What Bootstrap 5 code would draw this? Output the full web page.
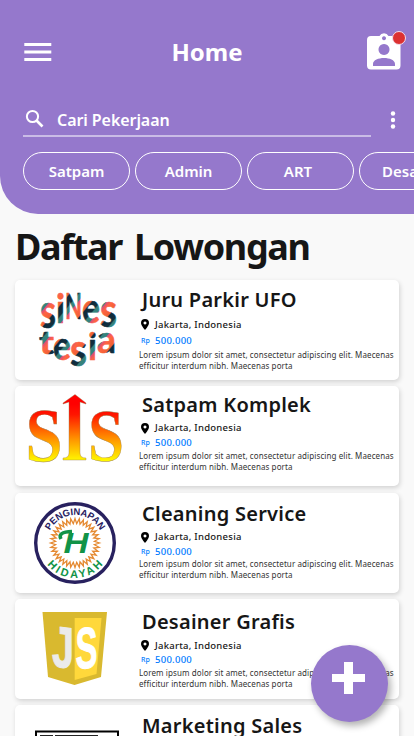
<!DOCTYPE html>
<html lang="id">
<head>
<meta charset="utf-8">
<meta name="viewport" content="width=device-width, initial-scale=1">
<title>Home</title>
<link href="https://cdn.jsdelivr.net/npm/bootstrap@5.3.0/dist/css/bootstrap.min.css" rel="stylesheet">
<style>
body{font-family:"Noto Sans","Open Sans",sans-serif;background:#f9f9f9;color:#161616;height:736px;overflow:hidden}
.hero{background:#9578cc;height:214px;border-bottom-left-radius:38px;color:#fff;padding:31px 0 0 23px}
.topbar{height:42px;padding-right:12px}
.topbar h1{font-size:24px;font-weight:700;line-height:42px;padding-right:6px}
.dot{position:absolute;width:14px;height:14px;right:-4px;top:0;background:#dc3130;border:1px solid #f3dcea;border-radius:50%}
.search-row{margin-top:31px;height:33px}
.search-line{width:348px;height:33px;border-bottom:2px solid #cabce6}
.search-line span{font-size:16px;font-weight:600;line-height:30px;margin-left:12px;letter-spacing:-.07px}
.chips{margin-top:15px;gap:5px}
.chip{flex:0 0 107px;height:38px;border:1px solid #fff;border-radius:19px;font-size:15px;font-weight:600;color:#fff;padding:0;line-height:36px}
.chip:nth-child(3){padding-right:5px}
.chip:nth-child(4){padding-left:4px}
.page-title{font-size:36px;font-weight:700;line-height:48px;letter-spacing:-1.35px;word-spacing:4px;margin:9px 0 9px 15px}
.jobs{padding:0 15px;gap:6.25px}
.job{height:100px;flex:none;border:0;border-radius:5px;box-shadow:1px 2px 5px rgba(0,0,0,.16)}
.job-logo{width:124px;height:100px;flex:none}
.job-text{padding-top:var(--t)}
.job-text h3{font-size:20px;font-weight:600;line-height:28px;letter-spacing:.25px;margin:0 0 0 3px}
.job-text .place{font-size:9.5px;line-height:14px;font-weight:500;letter-spacing:.25px;margin-top:var(--a)}
.job-text .pay{font-size:9.5px;line-height:14px;font-weight:500;letter-spacing:.27px;color:#007bff;margin-top:var(--b)}
.pay i{font-style:normal;font-size:7px;width:16px;padding-left:2px;line-height:13px;letter-spacing:0}
.place svg{width:8px;height:11px;margin:0 6px 0 2px}
.job-text p{font-size:8px;line-height:11px;letter-spacing:.1px;margin:var(--c) 0 0;color:#333;white-space:nowrap}
.job:nth-child(1){--t:6px;--a:3.5px;--b:2.5px;--c:.5px}
.job:nth-child(2){--t:5px;--a:2px;--b:1px;--c:0px}
.job:nth-child(3){--t:7.5px;--a:2px;--b:1px;--c:-1.5px}
.job:nth-child(4){--t:9px;--a:3px;--b:.5px;--c:-.5px}
.job:nth-child(5){--t:6.5px;--a:2px;--b:0px;--c:1px}
.fab{position:fixed;left:311px;top:645px;width:77px;height:77px;background:#9578cc;border:0;border-radius:50%;box-shadow:3px 4px 7px rgba(0,0,0,.3);padding:0}
.fab svg{display:block}
</style>
<script src="https://cdn.jsdelivr.net/npm/bootstrap@5.3.0/dist/js/bootstrap.bundle.min.js"></script>
</head>
<body>
<header class="hero overflow-hidden">
  <div class="topbar d-flex justify-content-between align-items-center">
    <svg width="30" height="20" fill="#fff"><path d="M1.300 1h27v3h-27zM1.300 8.500h27v3h-27zM1.300 16h27v3h-27z"/></svg>
    <h1 class="m-0">Home</h1>
    <div class="position-relative d-flex">
      <svg width="35" height="42" fill="#fff"><path fill-rule="evenodd" d="M4 5h8.500a5 5 0 0 1 9 0h8q4 0 4 4v25.500q0 4-4 4H4q-4 0-4-4V9q0-4 4-4zM17 5.200a2 2 0 1 0 .01 0zM17 13a5.500 5.500 0 1 0 .01 0zM6 35h22v-2c0-8-22-8-22 0z"/></svg>
      <span class="dot"></span>
    </div>
  </div>
  <div class="search-row d-flex">
    <div class="search-line d-flex align-items-center">
      <svg width="22" height="28" fill="none" stroke="#fff"><circle cx="9.500" cy="10.500" r="5.600" stroke-width="2"/><path d="M13.500 14.500l6 6" stroke-width="2.600"/></svg>
      <span>Cari Pekerjaan</span>
    </div>
    <svg class="ms-3" width="12" height="33" fill="#fff"><circle cx="6" cy="9.500" r="2.200"/><circle cx="6" cy="16" r="2.200"/><circle cx="6" cy="22.500" r="2.200"/></svg>
  </div>
  <div class="chips d-flex">
    <button class="btn chip">Satpam</button><button class="btn chip">Admin</button><button class="btn chip">ART</button><button class="btn chip">Desainer</button>
  </div>
</header>
<h2 class="page-title">Daftar Lowongan</h2>
<svg class="d-none"><symbol id="pin" viewBox="0 0 8 11"><path fill="#000" fill-rule="evenodd" d="M4 0a4 4 0 0 1 4 4c0 2.600-4 7-4 7S0 6.600 0 4a4 4 0 0 1 4-4zM4 2.500a1.500 1.500 0 1 0 .01 0z"/></symbol></svg>
<main class="jobs d-flex flex-column">
  <article class="job card flex-row">
    <svg class="job-logo" viewBox="0 0 124 100">
      <defs><linearGradient id="ink" gradientUnits="userSpaceOnUse" x1="0" y1="0" x2="17" y2="14" spreadMethod="repeat"><stop offset="0" stop-color="#ff6542"/><stop offset=".28" stop-color="#f06035"/><stop offset=".34" stop-color="#10293a"/><stop offset=".6" stop-color="#12303f"/><stop offset=".66" stop-color="#35827d"/><stop offset=".82" stop-color="#35827d"/><stop offset=".86" stop-color="#db4d78"/><stop offset="1" stop-color="#ff6542"/></linearGradient></defs>
      <g font-family="Lato" font-weight="700" fill="url(#ink)" stroke="url(#ink)" stroke-width=".6">
        <text x="25" y="48" font-size="47" textLength="16" lengthAdjust="spacingAndGlyphs">s</text>
        <text x="41" y="43" font-size="40" textLength="9" lengthAdjust="spacingAndGlyphs">i</text>
        <text x="50" y="39" font-size="36" textLength="17" lengthAdjust="spacingAndGlyphs">N</text>
        <text x="67" y="43" font-size="42" textLength="18" lengthAdjust="spacingAndGlyphs">e</text>
        <text x="85" y="47" font-size="48" textLength="17" lengthAdjust="spacingAndGlyphs">s</text>
        <text x="24" y="74" font-size="33" textLength="15" lengthAdjust="spacingAndGlyphs">t</text>
        <text x="38" y="80" font-size="40" textLength="18" lengthAdjust="spacingAndGlyphs">e</text>
        <text x="55" y="86" font-size="45" textLength="17" lengthAdjust="spacingAndGlyphs">s</text>
        <text x="73" y="80" font-size="38" textLength="9" lengthAdjust="spacingAndGlyphs">i</text>
        <text x="82" y="73" font-size="38" textLength="19" lengthAdjust="spacingAndGlyphs">a</text>
      </g>
    </svg>
    <div class="job-text">
      <h3>Juru Parkir UFO</h3>
      <div class="place d-flex align-items-center"><svg><use href="#pin"/></svg><span>Jakarta, Indonesia</span></div>
      <div class="pay d-flex"><i>Rp</i><span>500.000</span></div>
      <p>Lorem ipsum dolor sit amet, consectetur adipiscing elit. Maecenas<br>efficitur interdum nibh. Maecenas porta</p>
    </div>
  </article>
  <article class="job card flex-row">
    <svg class="job-logo" viewBox="0 0 124 100">
      <defs><linearGradient id="fire" gradientUnits="userSpaceOnUse" x1="0" y1="18" x2="0" y2="76"><stop offset="0" stop-color="#f00"/><stop offset=".18" stop-color="#ff1500"/><stop offset=".6" stop-color="#ff9200"/><stop offset="1" stop-color="#ff0"/></linearGradient></defs>
      <g font-family="Liberation Serif" font-weight="700" fill="url(#fire)" stroke="#9b7a4d" stroke-width=".4">
        <text x="10.500" y="74.500" font-size="77" textLength="37" lengthAdjust="spacingAndGlyphs">S</text>
        <text x="73" y="74.500" font-size="73" textLength="36" lengthAdjust="spacingAndGlyphs">S</text>
        <path d="M60 8.500l11 8.500v1l-6-2v51q0 5 6 5v2H48v-2q6 0 6-5V16l-6 2v-1z"/>
      </g>
    </svg>
    <div class="job-text">
      <h3>Satpam Komplek</h3>
      <div class="place d-flex align-items-center"><svg><use href="#pin"/></svg><span>Jakarta, Indonesia</span></div>
      <div class="pay d-flex"><i>Rp</i><span>500.000</span></div>
      <p>Lorem ipsum dolor sit amet, consectetur adipiscing elit. Maecenas<br>efficitur interdum nibh. Maecenas porta</p>
    </div>
  </article>
  <article class="job card flex-row">
    <svg class="job-logo" viewBox="0 0 124 100">
      <circle cx="60" cy="50" r="39.300" fill="#fff" stroke="#28215f" stroke-width="3.400"/>
      <polygon id="burst" fill="none" stroke="#e58a32" stroke-width="1.300"/>
      <path id="arcTop" d="M32 50a28 28 0 0 1 56 0" fill="none"/>
      <path id="arcBottom" d="M25 50a35 35 0 0 0 70 0" fill="none"/>
      <g font-family="Liberation Sans" font-weight="700" text-anchor="middle">
        <text font-size="9.500" fill="#28215f"><textPath href="#arcTop" startOffset="50%" textLength="62">PENGINAPAN</textPath></text>
        <text font-size="11" fill="#119347"><textPath href="#arcBottom" startOffset="50%" textLength="64">HIDAYAH</textPath></text>
        <text x="61" y="60" font-size="29" font-style="italic" fill="#119347" textLength="25" lengthAdjust="spacingAndGlyphs">H</text>
      </g>
      <path d="M46 46q-4-7 11-7.500" fill="none" stroke="#119347" stroke-width="3.500"/>
    </svg>
    <div class="job-text">
      <h3>Cleaning Service</h3>
      <div class="place d-flex align-items-center"><svg><use href="#pin"/></svg><span>Jakarta, Indonesia</span></div>
      <div class="pay d-flex"><i>Rp</i><span>500.000</span></div>
      <p>Lorem ipsum dolor sit amet, consectetur adipiscing elit. Maecenas<br>efficitur interdum nibh. Maecenas porta</p>
    </div>
  </article>
  <article class="job card flex-row">
    <svg class="job-logo" viewBox="0 0 124 100">
      <path d="M27.500 13h64.500l-6 65-26.500 8-26.500-8z" fill="#d9b92f"/>
      <path d="M59.700 19H86.500l-5 56-21.800 6z" fill="#ffd83b"/>
      <g font-family="Liberation Sans" font-weight="700" font-size="58" stroke-width="1">
        <text transform="translate(37 67) skewY(7)" fill="#ebebeb" stroke="#ebebeb" textLength="22" lengthAdjust="spacingAndGlyphs">J</text>
        <text transform="translate(60.500 70) skewY(-5)" fill="#fff" stroke="#fff" textLength="22" lengthAdjust="spacingAndGlyphs">S</text>
      </g>
    </svg>
    <div class="job-text">
      <h3>Desainer Grafis</h3>
      <div class="place d-flex align-items-center"><svg><use href="#pin"/></svg><span>Jakarta, Indonesia</span></div>
      <div class="pay d-flex"><i>Rp</i><span>500.000</span></div>
      <p>Lorem ipsum dolor sit amet, consectetur adipiscing elit. Maecenas<br>efficitur interdum nibh. Maecenas porta</p>
    </div>
  </article>
  <article class="job card flex-row">
    <svg class="job-logo" viewBox="0 0 124 100">
      <path d="M21 60V26.500h82V60" fill="none" stroke="#000" stroke-width="2"/>
      <path d="M25 30h13v20H25zM40 30h43v20H40z" fill="#222"/>
    </svg>
    <div class="job-text">
      <h3>Marketing Sales</h3>
    </div>
  </article>
</main>
<button class="fab btn" aria-label="Tambah"><svg width="77" height="77"><path d="M33 17h9v12h12v8H42v12h-9V37H21v-8h12z" fill="#fff"/></svg></button>
<script>
// Zigzag sunburst inside the round emblem
const pts = [];
for (let i = 0; i < 72; i++) {
  const r = i % 2 ? 19.5 : 24.5, a = i * Math.PI / 36;
  pts.push((60 + r * Math.cos(a)).toFixed(1) + ',' + (50 + r * Math.sin(a)).toFixed(1));
}
document.getElementById('burst').setAttribute('points', pts.join(' '));
</script>
</body>
</html>
